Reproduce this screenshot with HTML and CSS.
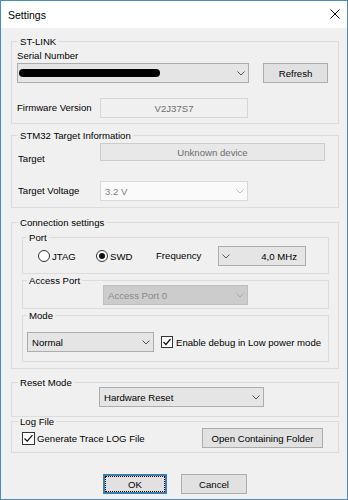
FILE: index.html
```html
<!DOCTYPE html>
<html lang="en">
<head>
  <meta charset="UTF-8" />
  <title>Settings</title>
  <link rel="stylesheet" href="styles.css">
</head>
<body>
  <div class="window">
    <div class="titlebar">
      <span class="title">Settings</span>
      <svg class="close" width="10" height="10" viewBox="0 0 10 10"><path d="M0.5 0.5L9.5 9.5M9.5 0.5L0.5 9.5" stroke="#000" stroke-width="1" fill="none"/></svg>
    </div>

    <div class="content">
      <!-- ST-LINK -->
      <div class="group stlink">
        <div class="group-title">ST-LINK</div>
        <div class="group-body">
          <div class="label">Serial Number</div>
          <div class="row serial-row">
            <div class="combo serial"><span class="redact"></span><svg class="arrow" width="8" height="5" viewBox="0 0 8 5"><polyline points="0.5,0.5 4,4 7.5,0.5" fill="none" stroke="#555"/></svg></div>
            <button class="btn refresh">Refresh</button>
          </div>
          <div class="row fw-row">
            <div class="label fw-label">Firmware Version</div>
            <div class="field fw">V2J37S7</div>
          </div>
        </div>
      </div>

      <!-- STM32 -->
      <div class="group stm32">
        <div class="group-title">STM32 Target Information</div>
        <div class="group-body">
          <div class="row target-row">
            <div class="label target-label">Target</div>
            <div class="field target">Unknown device</div>
          </div>
          <div class="row volt-row">
            <div class="label volt-label">Target Voltage</div>
            <div class="combo volt"><span class="val">3.2 V</span><svg class="arrow" width="8" height="5" viewBox="0 0 8 5"><polyline points="0.5,0.5 4,4 7.5,0.5" fill="none" stroke="#bdbdbd"/></svg></div>
          </div>
        </div>
      </div>

      <!-- Connection -->
      <div class="group conn">
        <div class="group-title">Connection settings</div>
        <div class="group-body">
          <div class="group sub port">
            <div class="group-title">Port</div>
            <div class="group-body">
              <div class="row port-row">
                <label class="radio jtag"><svg width="12" height="12" viewBox="0 0 12 12"><circle cx="6" cy="6" r="5.5" fill="#fff" stroke="#333"/></svg><span>JTAG</span></label>
                <label class="radio swd"><svg width="12" height="12" viewBox="0 0 12 12"><circle cx="6" cy="6" r="5.5" fill="#fff" stroke="#333"/><circle cx="6" cy="6" r="3" fill="#111"/></svg><span>SWD</span></label>
                <div class="label freq-label">Frequency</div>
                <div class="combo freq"><svg class="arrow" width="8" height="5" viewBox="0 0 8 5"><polyline points="0.5,0.5 4,4 7.5,0.5" fill="none" stroke="#555"/></svg><span class="val">4,0 MHz</span></div>
              </div>
            </div>
          </div>

          <div class="group sub access">
            <div class="group-title">Access Port</div>
            <div class="group-body">
              <div class="combo ap"><span class="val">Access Port 0</span><svg class="arrow" width="8" height="5" viewBox="0 0 8 5"><polyline points="0.5,0.5 4,4 7.5,0.5" fill="none" stroke="#a8a8a8"/></svg></div>
            </div>
          </div>

          <div class="group sub mode">
            <div class="group-title">Mode</div>
            <div class="group-body">
              <div class="row mode-row">
                <div class="combo mode-combo"><span class="val">Normal</span><svg class="arrow" width="8" height="5" viewBox="0 0 8 5"><polyline points="0.5,0.5 4,4 7.5,0.5" fill="none" stroke="#555"/></svg></div>
                <label class="check lowpower"><svg width="12" height="12" viewBox="0 0 12 12"><rect x="0.5" y="0.5" width="11" height="11" fill="#fff" stroke="#333"/><polyline points="2.5,6 5,8.5 9.5,3" fill="none" stroke="#111" stroke-width="1.2"/></svg><span>Enable debug in Low power mode</span></label>
              </div>
            </div>
          </div>
        </div>
      </div>

      <!-- Reset -->
      <div class="group reset">
        <div class="group-title">Reset Mode</div>
        <div class="group-body">
          <div class="combo reset-combo"><span class="val">Hardware Reset</span><svg class="arrow" width="8" height="5" viewBox="0 0 8 5"><polyline points="0.5,0.5 4,4 7.5,0.5" fill="none" stroke="#555"/></svg></div>
        </div>
      </div>

      <!-- Log -->
      <div class="group log">
        <div class="group-title">Log File</div>
        <div class="group-body">
          <div class="row log-row">
            <label class="check trace"><svg width="13" height="13" viewBox="0 0 13 13"><rect x="0.5" y="0.5" width="12" height="12" fill="#fff" stroke="#333"/><polyline points="2.5,6.5 5.2,9.2 10.5,3.2" fill="none" stroke="#111" stroke-width="1.2"/></svg><span>Generate Trace LOG File</span></label>
            <button class="btn folder">Open Containing Folder</button>
          </div>
        </div>
      </div>

      <div class="row actions">
        <button class="btn ok"><span>OK</span></button>
        <button class="btn cancel">Cancel</button>
      </div>
    </div>
  </div>
</body>
</html>
```

FILE: styles.css
```css
*{margin:0;padding:0;box-sizing:border-box;}
body{font-family:"Liberation Sans",Arial,sans-serif;font-size:9.6px;color:#000;background:#fff;}
button{font:inherit;color:inherit;cursor:default;}

.window{width:348px;height:500px;border:1px solid #4a8cb4;background:#f0f0f0;}
.titlebar{height:27px;background:#fff;display:flex;align-items:center;padding:0 7px;}
.title{font-size:10.5px;}
.close{margin-left:auto;margin-top:-1px;}

.content{display:flex;flex-direction:column;padding:0 8px 0 10px;}

/* group boxes */
.group{border:1px solid #dcdcdc;display:flex;flex-direction:column;}
.group-title{align-self:flex-start;margin:-5px 0 0 6px;padding:0 2px;line-height:10px;background:#f0f0f0;white-space:nowrap;}
.sub .group-title{margin-left:4px;}
.group-body{display:flex;flex-direction:column;}
.row{display:flex;align-items:center;}
.label{line-height:12px;white-space:nowrap;}

/* controls */
.combo{height:20px;display:flex;align-items:center;background:#e5e5e5;border:1px solid #adadad;padding:0 3px 0 4px;}
.combo .val{white-space:nowrap;}
.combo .arrow{margin-left:auto;}
.field{height:20px;display:flex;align-items:center;justify-content:center;background:#f0f0f0;border:1px solid #d6d6d6;color:#6d6d6d;}
.btn{height:20px;background:#e1e1e1;border:1px solid #adadad;display:flex;align-items:center;justify-content:center;white-space:nowrap;}
.radio,.check{display:flex;align-items:center;white-space:nowrap;}

/* ST-LINK */
.stlink{margin-top:13px;}
.stlink .group-body{padding:3px 0 5px 5px;}
.serial-row{margin-top:1px;}
.serial{width:232px;padding-left:1px;}
.redact{width:141px;height:8px;background:#000;border-radius:4px;}
.refresh{width:65px;margin-left:14px;}
.fw-row{margin-top:15px;}
.fw-label{width:83px;}
.fw{width:148px;}

/* STM32 */
.stm32{margin-top:11px;}
.stm32 .group-body{padding:2px 0 6px 6px;}
.target-row{align-items:flex-start;}
.target-label{width:82px;padding-top:10px;box-sizing:content-box;}
.target{width:225px;height:18px;background:#e8e8e8;border-color:#cccccc;}
.volt-row{margin-top:16px;}
.volt-label{width:82px;}
.volt{width:148px;background:#fafafa;border-color:#d9d9d9;color:#808080;}

/* connection */
.conn{margin-top:14px;}
.conn > .group-body{padding:9px 9px 6px 10px;}
.port .group-body{padding:3px 0 7px 15px;}
.port-row{height:20px;}
.radio svg{margin-right:2px;}
.jtag{width:58px;}
.swd{width:60px;}
.freq-label{width:62px;}
.freq{width:88px;padding:0 8px 0 3px;}
.freq .arrow{margin-left:0;}
.freq .val{margin-left:auto;}
.access{margin-top:6px;}
.access .group-body{padding:0 0 3px 80px;}
.ap{width:145px;margin-top:-1px;background:#cccccc;border-color:#bfbfbf;color:#8a8a8a;}
.mode{margin-top:6px;}
.mode .group-body{padding:11px 0 9px 4px;}
.mode-combo{width:127px;}
.lowpower{margin-left:7px;}
.check svg{margin-right:3px;}

/* reset / log */
.reset{margin-top:13px;}
.reset .group-body{padding:0 0 9px 87px;}
.reset-combo{width:165px;margin-top:-1px;}
.log{margin-top:4px;}
.log .group-body{padding:1px 15px 4px 10px;}
.log-row{height:20px;}
.trace svg{margin-right:2px;}
.folder{width:121px;margin-left:auto;}

/* dialog buttons */
.actions{margin-top:21px;padding-left:92px;gap:14px;}
.ok{width:64px;border:1px solid #3c7fb1;box-shadow:inset 0 0 0 1px #3c7fb1;}
.ok span{display:flex;align-items:center;justify-content:center;width:58px;height:14px;outline:1px dotted #000;}
.cancel{width:66px;}
```
